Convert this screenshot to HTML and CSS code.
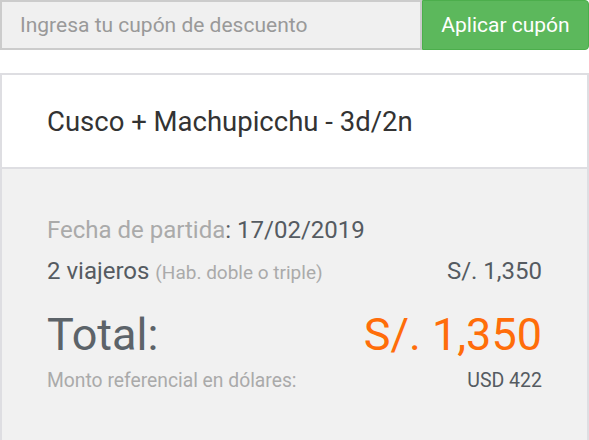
FILE: index.html
```html
<!DOCTYPE html>
<html lang="es">
<head>
<meta charset="utf-8">
<title>Resumen</title>
<link rel="stylesheet" href="styles.css">
</head>
<body>
<div class="coupon">
  <input class="coupon-input" type="text" placeholder="Ingresa tu cupón de descuento">
  <button class="coupon-btn">Aplicar cupón</button>
</div>
<div class="card">
  <div class="card-head">Cusco + Machupicchu - 3d/2n</div>
  <div class="card-body">
    <div class="line date"><span class="muted">Fecha de partida</span>: 17/02/2019</div>
    <div class="line row"><span>2 viajeros <span class="small muted">(Hab. doble o triple)</span></span><span>S/. 1,350</span></div>
    <div class="row total"><span>Total:</span><span class="orange">S/. 1,350</span></div>
    <div class="row ref"><span class="muted">Monto referencial en dólares:</span><span>USD 422</span></div>
  </div>
</div>
</body>
</html>
```
FILE: styles.css
```css
* { box-sizing: border-box; }
html, body { margin: 0; padding: 0; background: #fff; }
body { font-family: Roboto, "Noto Sans", sans-serif; color: #555b61; width: 589px; height: 440px; overflow: hidden; }
.coupon { display: flex; height: 50px; }
.coupon-input {
  flex: 1; min-width: 0; height: 50px; margin: 0;
  border: 2px solid #cccccc; background: #f0f0f0;
  padding: 0 0 0 18px; font-family: Roboto, sans-serif; font-size: 21px; color: #555;
  outline: none;
}
.coupon-input::placeholder { color: #999; }
.coupon-btn {
  width: 167px; height: 50px; margin: 0;
  background: #5cb85c; border: 1px solid #4cae4c; border-radius: 0 4px 4px 0;
  color: #fff; font-family: Roboto, sans-serif; font-size: 21px; padding: 0;
}
.card { margin-top: 23px; border: 2px solid #dedee2; }
.card-head {
  background: #fff; height: 94px; border-bottom: 2px solid #dedee2;
  padding: 0 45px; display: flex; align-items: center;
  font-size: 27.5px; color: #333;
}
.card-body { background: #f1f1f1; padding: 47px 45px 0; height: 271px; }
.line { font-size: 24px; line-height: 28px; }
.date { margin-bottom: 13px; }
.row { display: flex; justify-content: space-between; align-items: baseline; }
.muted { color: #aaa; }
.small { font-size: 19px; }
.total { font-size: 45px; line-height: 52px; margin-top: 22px; color: #5c6369; }
.orange { color: #ff6d0a; }
.ref { font-size: 19.3px; line-height: 22px; margin-top: 9px; }
.ref span:last-child { font-size: 19.5px; }
```
